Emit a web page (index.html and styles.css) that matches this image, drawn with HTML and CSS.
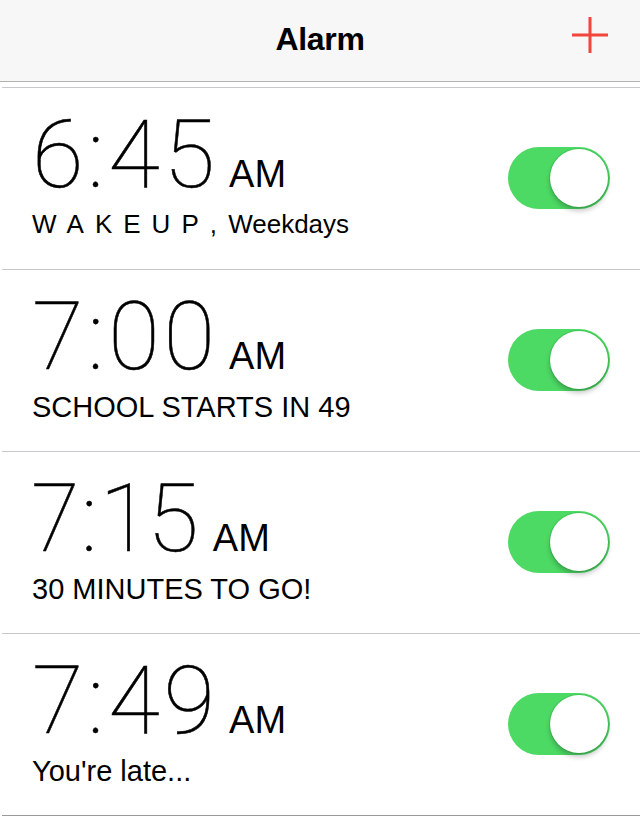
FILE: index.html
```html
<!DOCTYPE html>
<html lang="en">
<head>
  <meta charset="UTF-8" />
  <title>Alarm</title>
  <link rel="stylesheet" href="styles.css">
</head>
<body>

  <div class="navbar">
    <div class="nav-side"></div>
    <div class="nav-title">Alarm</div>
    <div class="nav-side nav-right">
      <button class="add-btn" aria-label="Add alarm">
        <svg width="36" height="36" viewBox="0 0 36 36">
          <path d="M18 0 V36 M0 18 H36" stroke="#f2453b" stroke-width="3" fill="none" />
        </svg>
      </button>
    </div>
  </div>

  <div class="alarm-list">
    <div class="alarm-row">
      <div class="alarm-info">
        <div class="alarm-time">6:45<span class="ampm">AM</span></div>
        <div class="alarm-label small"><span class="spaced">WAKEUP</span>, <span class="repeat">Weekdays</span></div>
      </div>
      <div class="switch on"><div class="knob"></div></div>
    </div>
    <div class="alarm-row">
      <div class="alarm-info">
        <div class="alarm-time">7:00<span class="ampm">AM</span></div>
        <div class="alarm-label">SCHOOL STARTS IN 49</div>
      </div>
      <div class="switch on"><div class="knob"></div></div>
    </div>
    <div class="alarm-row">
      <div class="alarm-info">
        <!-- the "1" is narrower than the other digits -->
        <div class="alarm-time narrow">7:15<span class="ampm">AM</span></div>
        <div class="alarm-label">30 MINUTES TO GO!</div>
      </div>
      <div class="switch on"><div class="knob"></div></div>
    </div>
    <div class="alarm-row">
      <div class="alarm-info">
        <div class="alarm-time">7:49<span class="ampm">AM</span></div>
        <div class="alarm-label">You're late...</div>
      </div>
      <div class="switch on"><div class="knob"></div></div>
    </div>
  </div>

</body>
</html>
```

FILE: styles.css
```css
html, body {
  margin: 0;
  padding: 0;
  background: #fff;
  font-family: "Liberation Sans", Arial, sans-serif;
  color: #000;
  overflow: hidden;
}
.navbar {
  display: grid;
  grid-template-columns: 1fr auto 1fr;
  align-items: start;
  height: 81px;
  background: #f7f7f7;
  border-bottom: 1px solid #b2b2b2;
}
.nav-title {
  margin-top: 23px;
  font-size: 32px;
  line-height: 32px;
  font-weight: bold;
  letter-spacing: -0.3px;
}
.nav-right {
  display: flex;
  justify-content: flex-end;
}
.add-btn {
  margin: 17px 32px 0 0;
  padding: 0;
  border: none;
  background: none;
  width: 36px;
  height: 36px;
  cursor: pointer;
}
.add-btn svg {
  display: block;
}
.alarm-list {
  margin: 5px 0 0 2px;
  border-top: 1px solid #c8c7cc;
}
.alarm-row {
  display: flex;
  align-items: center;
  justify-content: space-between;
  box-sizing: border-box;
  height: 182px;
  padding: 0 30px 0 30px;
  border-bottom: 1px solid #c8c7cc;
}
.alarm-row:last-child {
  border-bottom-color: #9a9a9a;
}
.alarm-info {
  align-self: flex-start;
  padding-top: 20px;
}
.alarm-time {
  font-family: Roboto, sans-serif;
  font-weight: 100;
  font-size: 94px;
  line-height: 94px;
  letter-spacing: 4px;
  -webkit-text-stroke: 0.5px #000;
  white-space: nowrap;
}
.alarm-time.narrow {
  font-variant-numeric: proportional-nums;
}
.ampm {
  font-family: "Liberation Sans", Arial, sans-serif;
  font-weight: normal;
  font-size: 38px;
  line-height: 38px;
  letter-spacing: 0;
  -webkit-text-stroke: 0;
  margin-left: 10px;
}
.alarm-label {
  margin-top: 6px;
  font-size: 29px;
  line-height: 34px;
  white-space: nowrap;
}
.alarm-label.small {
  font-size: 26px;
  margin-top: 5px;
}
.spaced {
  letter-spacing: 11px;
}
.repeat {
  margin-left: 4px;
}
.switch {
  position: relative;
  width: 102px;
  height: 62px;
  border-radius: 31px;
  background: #e5e5ea;
  margin-bottom: 1px;
}
.switch.on {
  background: #4cd964;
}
.knob {
  position: absolute;
  top: 2px;
  right: 2px;
  width: 58px;
  height: 58px;
  border-radius: 50%;
  background: #fff;
  box-shadow: 0 0 0 1px rgba(0, 80, 20, 0.12), 0 4px 5px rgba(0, 0, 0, 0.22);
}
```
